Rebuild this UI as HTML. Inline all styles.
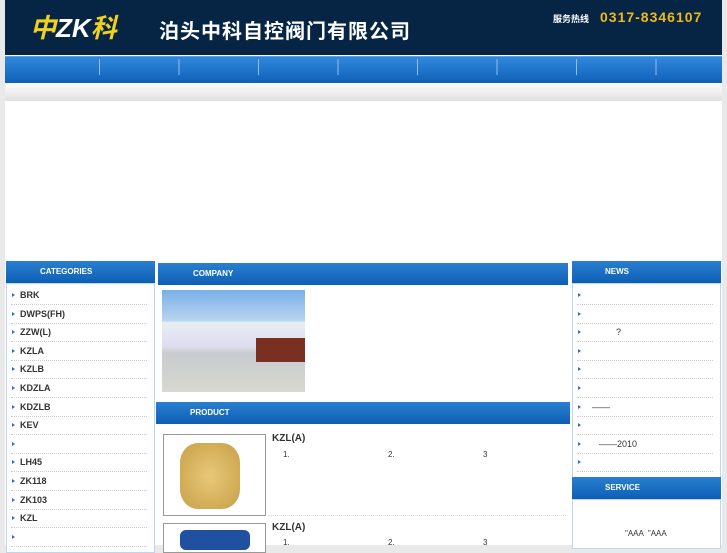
<!DOCTYPE html>
<html><head><meta charset="utf-8"><style>
*{margin:0;padding:0;box-sizing:border-box}
body{width:727px;height:545px;overflow:hidden;background:#e9e9e9;font-family:"Liberation Sans","Noto Sans CJK SC",sans-serif;position:relative}
.a{position:absolute}
.hdr{background:linear-gradient(#2a7fd0,#0d5fb4);color:#fff;font-size:8px;font-weight:bold;line-height:21px}
.bx{background:#fff;border:1px solid #bcd6f0}
.li{position:absolute;left:11px;width:136px;height:18.6px;border-bottom:1px dotted #ccc;font-size:9px;font-weight:bold;color:#333;line-height:18px;padding-left:9px}
.li:before{content:"";position:absolute;left:1px;top:7px;border-left:3px solid #2a6fc0;border-top:2px solid transparent;border-bottom:2px solid transparent}
</style></head><body>
<div class="a" style="left:5px;top:0;width:717px;height:545px;background:#fff"></div>
<div class="a" style="left:5px;top:0;width:717px;height:55px;background:#062545"></div>
<div class="a" style="left:30px;top:8px;font-size:26px;color:#f0d020;font-weight:bold;font-style:italic">中<span style="color:#fff">ZK</span>科</div>
<div class="a" style="left:159px;top:15px;font-size:20px;color:#fff;font-weight:bold;letter-spacing:1px">泊头中科自控阀门有限公司</div>
<div class="a" style="left:553px;top:12px;font-size:9px;color:#fff;font-weight:bold">服务热线</div>
<div class="a" style="left:600px;top:9px;font-size:14px;color:#f0b81a;font-weight:bold;letter-spacing:1px">0317-8346107</div>
<div class="a" style="left:5px;top:56px;width:717px;height:27px;background:linear-gradient(#3088dc,#1060b8);border-top:1px solid #5aa0e0"></div>
<div class="a" style="left:99px;top:59px;width:560px;height:16px;background:repeating-linear-gradient(90deg,#8cc0f0 0 1px,transparent 1px 79.5px)"></div>
<div class="a" style="left:5px;top:84px;width:717px;height:17px;background:linear-gradient(#f8f8f8,#f2f2f2 40%,#e0e0e0)"></div>

<div class="a hdr" style="left:6px;top:261px;width:149px;height:22px;padding-left:34px">CATEGORIES</div>
<div class="a bx" style="left:6px;top:283px;width:149px;height:270px"></div>
<div class="li" style="top:286px">BRK</div>
<div class="li" style="top:305px">DWPS(FH)</div>
<div class="li" style="top:323px">ZZW(L)</div>
<div class="li" style="top:342px">KZLA</div>
<div class="li" style="top:360px">KZLB</div>
<div class="li" style="top:379px">KDZLA</div>
<div class="li" style="top:398px">KDZLB</div>
<div class="li" style="top:416px">KEV</div>
<div class="li" style="top:435px"></div>
<div class="li" style="top:453px">LH45</div>
<div class="li" style="top:472px">ZK118</div>
<div class="li" style="top:491px">ZK103</div>
<div class="li" style="top:509px">KZL</div>
<div class="li" style="top:528px"></div>

<div class="a hdr" style="left:158px;top:263px;width:410px;height:22px;padding-left:35px">COMPANY</div>
<div class="a" style="left:162px;top:290px;width:143px;height:102px;background:linear-gradient(#7ab0e8 0,#b8d4ee 30%,#e8eef4 32%,#dde 55%,#c8ccd0 62%,#d8d8d0 100%)"></div>
<div class="a" style="left:256px;top:338px;width:49px;height:24px;background:#7a3020"></div>
<div class="a hdr" style="left:156px;top:402px;width:414px;height:22px;padding-left:34px">PRODUCT</div>

<div class="a" style="left:163px;top:434px;width:103px;height:82px;border:1px solid #999;background:#fff"></div>
<div class="a" style="left:180px;top:443px;width:60px;height:66px;background:radial-gradient(#e8c878,#c8a048);border-radius:30%"></div>
<div class="a" style="left:163px;top:523px;width:103px;height:30px;border:1px solid #999;background:#fff"></div>
<div class="a" style="left:180px;top:530px;width:70px;height:20px;background:#2050a0;border-radius:6px"></div>
<div class="a" style="left:272px;top:433px;font-size:10px;font-weight:bold;color:#333">KZL(A)</div>
<div class="a" style="left:283px;top:450px;font-size:8px;color:#333">1.</div>
<div class="a" style="left:388px;top:450px;font-size:8px;color:#333">2.</div>
<div class="a" style="left:483px;top:450px;font-size:8px;color:#333">3</div>
<div class="a" style="left:272px;top:522px;font-size:10px;font-weight:bold;color:#333">KZL(A)</div>
<div class="a" style="left:283px;top:538px;font-size:8px;color:#333">1.</div>
<div class="a" style="left:388px;top:538px;font-size:8px;color:#333">2.</div>
<div class="a" style="left:483px;top:538px;font-size:8px;color:#333">3</div>
<div class="a" style="left:268px;top:515px;width:298px;border-top:1px dotted #ddd"></div>

<div class="a hdr" style="left:572px;top:261px;width:149px;height:22px;padding-left:33px">NEWS</div>
<div class="a bx" style="left:572px;top:283px;width:149px;height:195px"></div>
<div class="li" style="left:577px;top:286px"></div>
<div class="li" style="left:577px;top:305px"></div>
<div class="li" style="left:577px;top:323px;font-weight:normal"><span style="margin-left:30px">?</span></div>
<div class="li" style="left:577px;top:342px"></div>
<div class="li" style="left:577px;top:360px"></div>
<div class="li" style="left:577px;top:379px"></div>
<div class="li" style="left:577px;top:398px;font-weight:normal"><span style="margin-left:6px">——</span></div>
<div class="li" style="left:577px;top:416px"></div>
<div class="li" style="left:577px;top:435px;font-weight:normal"><span style="margin-left:13px">——2010</span></div>
<div class="li" style="left:577px;top:453px"></div>
<div class="a hdr" style="left:572px;top:477px;width:149px;height:22px;padding-left:33px">SERVICE</div>
<div class="a bx" style="left:572px;top:499px;width:149px;height:50px"></div>
<div class="a" style="left:625px;top:529px;font-size:8px;color:#333">"AAA &nbsp;"AAA</div>
</body></html>
